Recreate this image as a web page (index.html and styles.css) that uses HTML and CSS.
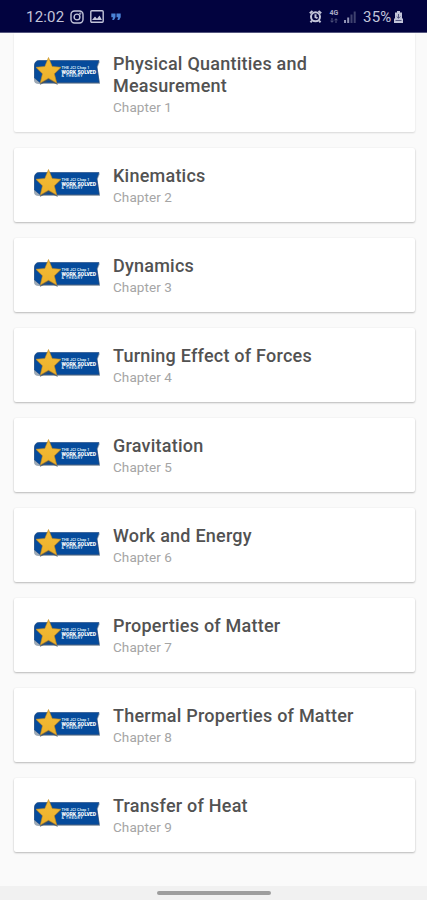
FILE: index.html
```html
<!DOCTYPE html>
<html lang="en">
<head>
<meta charset="utf-8">
<title>Chapters</title>
<link rel="stylesheet" href="styles.css">
</head>
<body>
<svg class="defs" aria-hidden="true">
  <defs>
    <linearGradient id="gold" x1="0" y1="0" x2="0" y2="1"><stop offset="0" stop-color="#f3bd38"/><stop offset="1" stop-color="#edb029"/></linearGradient>
    <symbol id="badge" viewBox="0 0 68 32">
      <path d="M6 5.500H67L64.500 11.500L67 28H6Q1 28 1 24V10Q1 5.500 6 5.500Z" fill="#8493a3" opacity=".8"/>
      <path d="M6 4.500H66L63.800 10.500L66.200 26.500H7L1.500 22V10Q1.500 4.500 6 4.500Z" fill="#064b9b" stroke="#15427a" stroke-width=".6"/>
      <path d="M15.700 2.500L19.500 11.400L28.700 12L21.800 18.500L24.800 29L15.800 24.500L6.800 29L9.600 18.500L2.800 12L12 11.400Z" fill="#46505a" opacity=".7"/>
      <path d="M15.500 1.500L19.200 10.500L28 11.300L21.300 17.700L23.700 27L15.500 22.300L7.300 27L9.500 17.700L3 11.300L11.800 10.500Z" fill="url(#gold)" stroke="#c38d24" stroke-width=".6" stroke-linejoin="round"/>
      <g class="badge-text"><text x="28.500" y="12.900" textLength="28">THE JCI Chap 1</text><text class="wide" x="28.500" y="17.500" textLength="34.500" lengthAdjust="spacingAndGlyphs">WORK SOLVED</text><text x="28.500" y="21.300" textLength="21">&amp; THEORY</text></g>
    </symbol>
  </defs>
</svg>
<header class="status">
  <span class="time">12:02</span>
  <svg class="camera" viewBox="0 0 14 14"><rect x="1" y="1" width="12" height="12" rx="3.500"/><circle cx="7" cy="7" r="2.900"/><circle cx="10.300" cy="3.600" r=".4"/></svg>
  <svg class="photo" viewBox="0 0 14 13"><rect x=".8" y=".8" width="12.400" height="11.400" rx="1"/><path d="M2 10L5 6.500L7 8.800L9.500 5.500L12 10Z"/></svg>
  <svg class="quote" viewBox="0 0 10 8"><path d="M.3 .5H4.500V4.200L3 7H1.200L2 4.200H.3ZM5.500 .5H9.700V4.200L8.200 7H6.400L7.200 4.200H5.500Z"/></svg>
  <span class="grow"></span>
  <svg class="alarm" viewBox="0 0 13 13"><circle cx="6.500" cy="6.800" r="4.500"/><path d="M.8 3.200L3.500 .9M12.200 3.200L9.500 .9M6.500 4.300V7.200L8.500 8.200M3 10.500L1.500 12.400M10 10.500L11.500 12.400"/></svg>
  <span class="network"><b>4G</b><svg viewBox="0 0 8 5"><path d="M2 0V4M.5 2.700L2 4.300L3.500 2.700M6 5V1M4.500 2.300L6 .7L7.500 2.300"/></svg></span>
  <svg class="signal" viewBox="0 0 12 12"><path d="M0 9H2V12H0ZM3.200 6.500H5.200V12H3.200Z"/><path class="dim" d="M6.500 3.500H8.500V12H6.500ZM9.700 .5H11.700V12H9.700Z"/></svg>
  <span class="percent">35%</span>
  <svg class="battery" viewBox="0 0 9 12"><path d="M3 0H6V1.500H8V7L9 8V12H0V8L1 7V1.500H3Z"/><path class="arrow" d="M4.500 3V7M2.700 5.500L4.500 7.300L6.300 5.500M1.500 9.500H7.500"/></svg>
</header>
<main class="list">
  <article class="card tall"><svg class="badge"><use href="#badge"/></svg><div><h2>Physical Quantities and Measurement</h2><p>Chapter 1</p></div></article>
  <article class="card"><svg class="badge"><use href="#badge"/></svg><div><h2>Kinematics</h2><p>Chapter 2</p></div></article>
  <article class="card"><svg class="badge"><use href="#badge"/></svg><div><h2>Dynamics</h2><p>Chapter 3</p></div></article>
  <article class="card"><svg class="badge"><use href="#badge"/></svg><div><h2>Turning Effect of Forces</h2><p>Chapter 4</p></div></article>
  <article class="card"><svg class="badge"><use href="#badge"/></svg><div><h2>Gravitation</h2><p>Chapter 5</p></div></article>
  <article class="card"><svg class="badge"><use href="#badge"/></svg><div><h2>Work and Energy</h2><p>Chapter 6</p></div></article>
  <article class="card"><svg class="badge"><use href="#badge"/></svg><div><h2>Properties of Matter</h2><p>Chapter 7</p></div></article>
  <article class="card"><svg class="badge"><use href="#badge"/></svg><div><h2>Thermal Properties of Matter</h2><p>Chapter 8</p></div></article>
  <article class="card"><svg class="badge"><use href="#badge"/></svg><div><h2>Transfer of Heat</h2><p>Chapter 9</p></div></article>
</main>
<footer class="navbar"><span class="handle"></span></footer>
</body>
</html>
```
FILE: styles.css
```css
* { box-sizing: border-box; }
body {
  margin: 0;
  height: 900px;
  overflow: hidden;
  display: flex;
  flex-direction: column;
  background: #fafafa;
  font-family: Roboto, "Liberation Sans", sans-serif;
}
.defs { position: absolute; width: 0; height: 0; }
.status {
  flex: none;
  height: 33px;
  padding: 1px 24px 0 26px;
  display: flex;
  align-items: center;
  background: #02033f;
  border-bottom: 1px solid #55577f;
  color: #c3c5da;
}
.status svg { flex: none; fill: none; stroke: #c3c5da; }
.time { width: 39px; font-size: 15px; letter-spacing: .2px; }
.camera { width: 14px; height: 14px; margin-left: 5px; stroke-width: 1.4; }
.photo { width: 14px; height: 13px; margin-left: 6px; stroke-width: 1.4; }
.photo path { fill: #c3c5da; stroke: none; }
.status .quote { width: 10px; height: 8px; margin-left: 7px; fill: #4b83d6; stroke: none; }
.grow { flex: 1; }
.alarm { width: 13px; height: 13px; margin-right: 7px; stroke-width: 2; }
.network {
  width: 10px;
  margin-right: 5px;
  display: flex;
  flex-direction: column;
  align-items: center;
  gap: 1px;
  font-size: 7px;
  line-height: 7px;
  color: #a9abc8;
}
.status .network svg { width: 8px; height: 5px; stroke: #55587f; }
.status .signal { width: 12px; height: 12px; margin-right: 7px; fill: #9193b4; stroke: none; }
.status .signal .dim { fill: #3f426f; }
.percent { width: 31px; font-size: 15px; letter-spacing: .2px; }
.status .battery { width: 9px; height: 12px; fill: #c3c5da; stroke: none; }
.status .battery .arrow { fill: none; stroke: #454775; stroke-width: .9; }
.list {
  flex: 1;
  padding: 0 12.500px 0 14px;
  display: flex;
  flex-direction: column;
  gap: 16px;
}
.card {
  height: 74px;
  padding: 17px 20px 0 19px;
  display: flex;
  align-items: flex-start;
  background: #fff;
  border-radius: 2px;
  box-shadow: 0 1px 2px rgba(0, 0, 0, .25), 0 0 2px rgba(0, 0, 0, .05);
}
.card.tall {
  height: 99px;
  padding-top: 20px;
  border-radius: 0 0 2px 2px;
  box-shadow: 0 1px 2px rgba(0, 0, 0, .14);
}
.card.tall div { width: 215px; }
.badge { flex: none; width: 68px; height: 32px; margin: 3px 12px 0 0; }
.badge-text { fill: #d5e6f5; font: bold 3.800px Roboto, sans-serif; }
.badge-text .wide { font-size: 4.800px; font-weight: 900; fill: #fff; }
h2 { margin: 0; font-size: 18px; line-height: 22px; font-weight: 500; letter-spacing: .23px; color: #525252; }
p { margin: 2px 0 0; font-size: 13.500px; line-height: 16px; letter-spacing: .08px; color: #a5a5a5; }
.navbar {
  flex: none;
  height: 14px;
  padding-top: 5px;
  display: flex;
  justify-content: center;
  background: #f1f1f1;
}
.handle { width: 114px; height: 4px; border-radius: 2px; background: #9d9d9d; }
```
